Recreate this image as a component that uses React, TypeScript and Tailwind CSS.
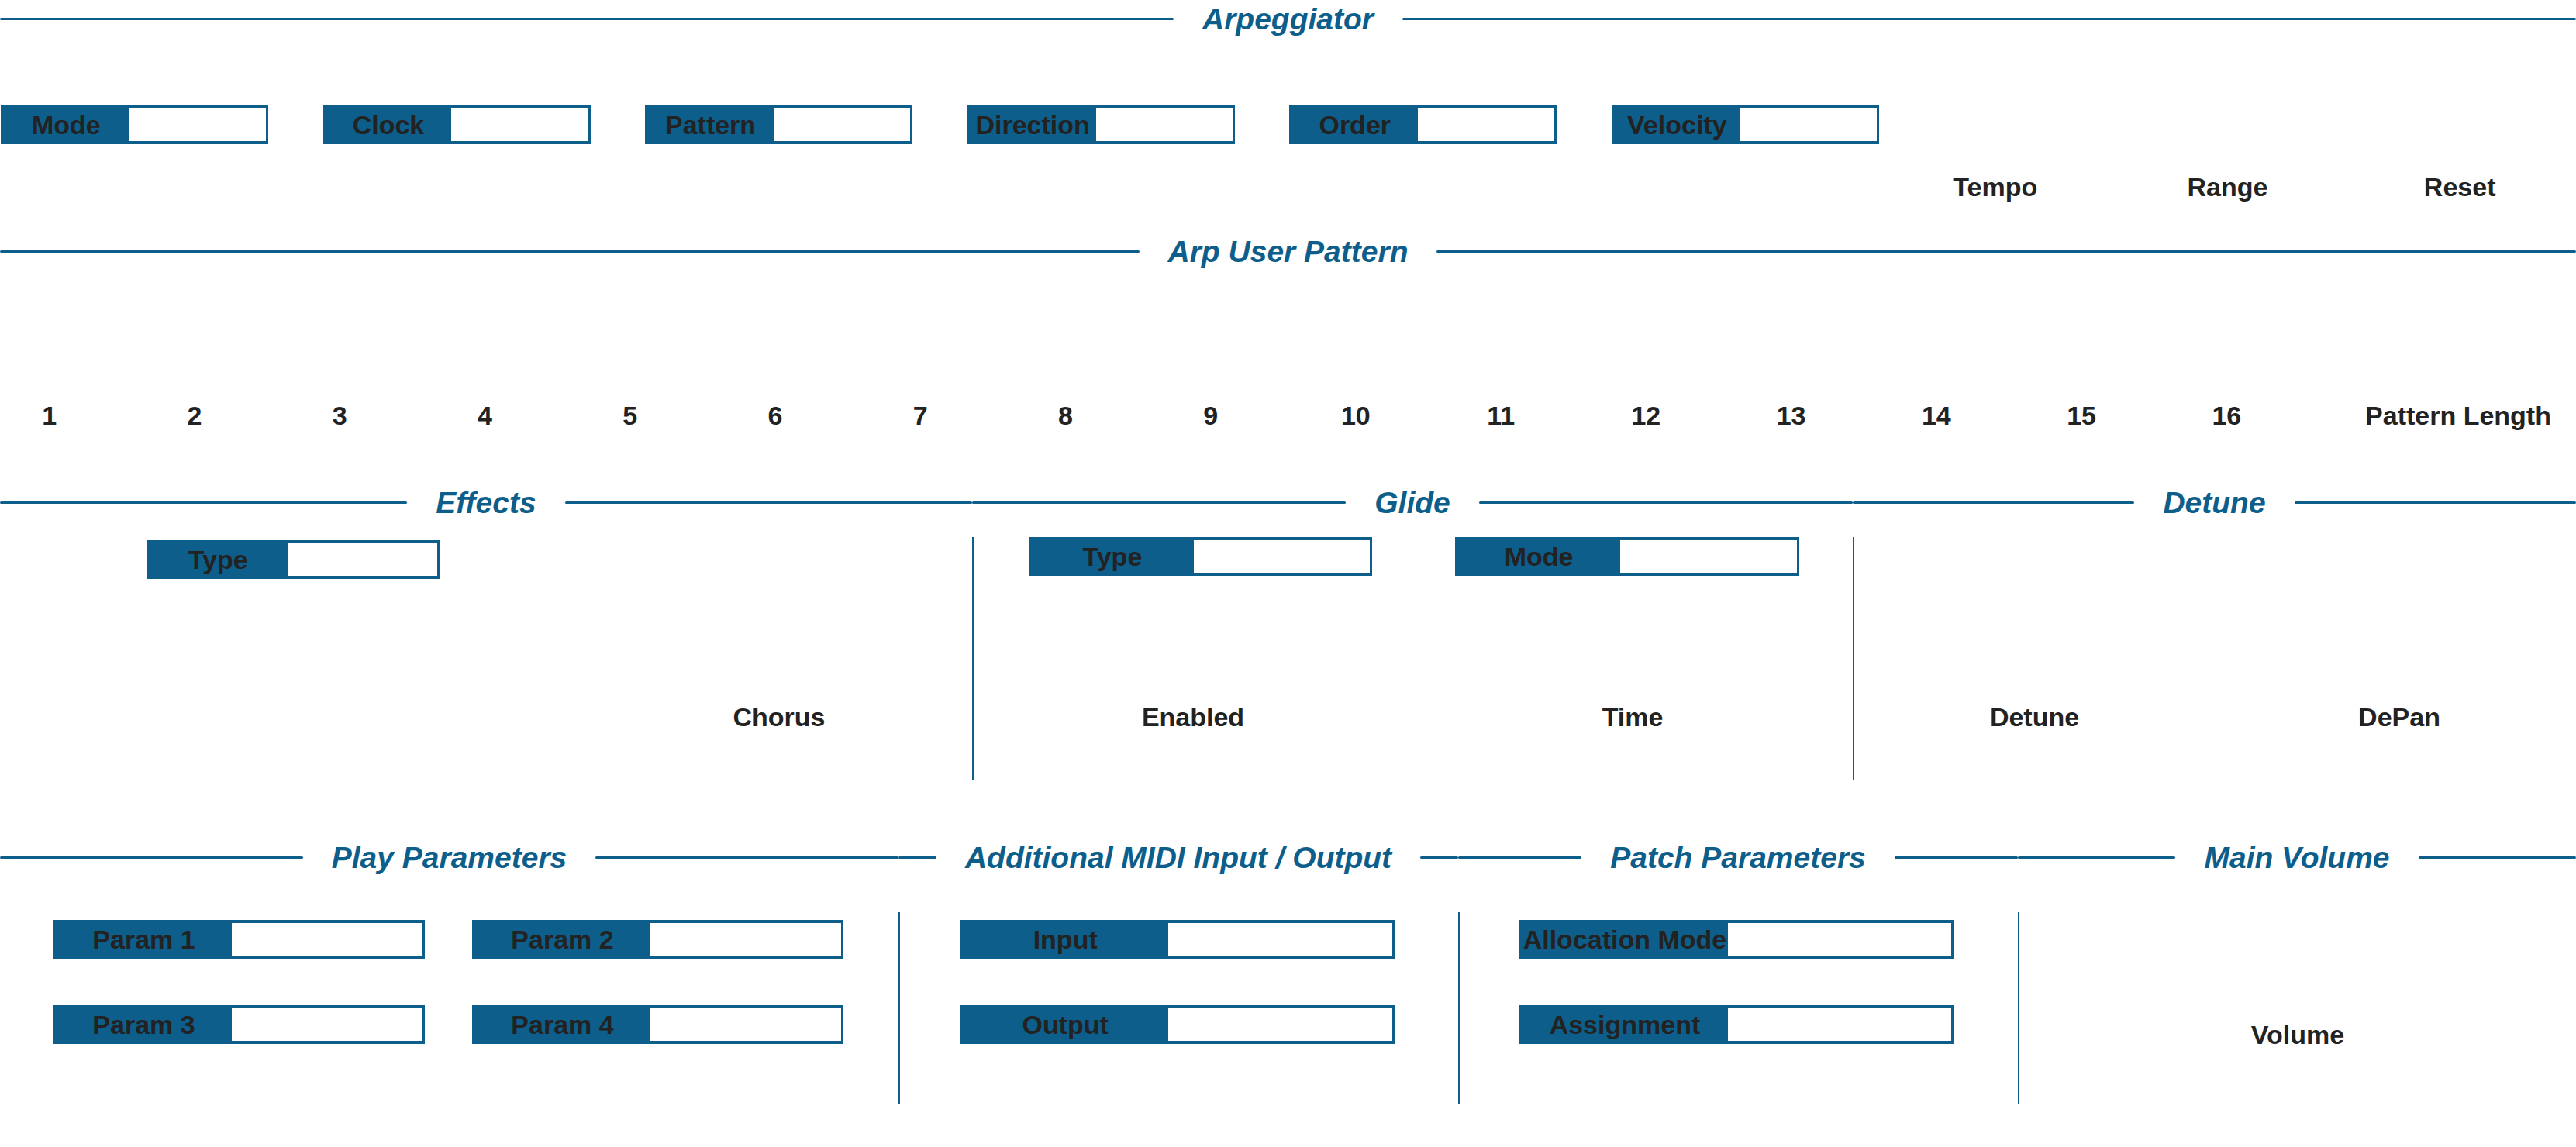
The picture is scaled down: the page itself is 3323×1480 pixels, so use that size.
import React from 'react';

const Rule: React.FC = () => <div className="h-[3px] flex-1 rounded-full bg-[#0d5e8a]" />;

const Header: React.FC<{ title: string }> = ({ title }) => (
  <div className="flex h-[48px] items-center">
    <Rule />
    <span className="mt-[2px] whitespace-nowrap px-[37px] text-[39px] font-bold italic text-[#0d5e8a]">{title}</span>
    <Rule />
  </div>
);

const Select: React.FC<{ label: string; className?: string }> = ({ label, className = '' }) => (
  <div className={`flex h-[50px] shrink-0 border-x-[3px] border-y-[4px] border-[#0d5e8a] bg-[#0d5e8a] ${className}`}>
    <div className="flex w-[48%] items-center justify-center whitespace-nowrap text-[34px] font-bold leading-none text-[#222]">
      {label}
    </div>
    <div className="flex-1 bg-white" />
  </div>
);

const Label: React.FC<{ text: string; className?: string }> = ({ text, className = '' }) => (
  <div className={`whitespace-nowrap text-center text-[34px] font-bold leading-[40px] text-[#222] ${className}`}>{text}</div>
);

const Divider: React.FC<{ className?: string }> = ({ className = '' }) => (
  <div className={`w-[2px] shrink-0 bg-[#0d5e8a] ${className}`} />
);

const arpBoxes = ['Mode', 'Clock', 'Pattern', 'Direction', 'Order', 'Velocity'];
const arpKnobs = ['Tempo', 'Range', 'Reset'];
const steps = Array.from({ length: 16 }, (_, i) => String(i + 1));

export default function App() {
  return (
    <div className="h-[1480px] w-[3323px] overflow-hidden bg-white font-['Liberation_Sans',Arial,sans-serif]">
      {/* Arpeggiator */}
      <Header title="Arpeggiator" />
      <div className="flex h-[252px] items-start">
        <div className="flex gap-[70.6px] pl-[1px] pt-[88px]">
          {arpBoxes.map((l) => (
            <Select key={l} label={l} className="w-[345px]" />
          ))}
        </div>
        <div className="flex flex-1 pt-[173px]">
          {arpKnobs.map((l) => (
            <Label key={l} text={l} className="flex-1" />
          ))}
        </div>
      </div>

      {/* Arp user pattern */}
      <Header title="Arp User Pattern" />
      <div className="flex h-[276px] items-start pt-[168px]">
        <div className="flex gap-[60px]">
          {steps.map((s) => (
            <Label key={s} text={s} className="w-[127.25px]" />
          ))}
        </div>
        <Label text="Pattern Length" className="ml-[60px] flex-1 pl-[23px]" />
      </div>

      {/* Effects / Glide / Detune */}
      <div className="flex h-[458px]">
        <div className="w-[1254px] shrink-0">
          <Header title="Effects" />
          <div className="flex items-start">
            <div className="w-[756px] pt-[25px]">
              <Select label="Type" className="ml-[189px] w-[378px]" />
            </div>
            <div className="flex-1 pt-[233px]">
              <Label text="Chorus" />
            </div>
          </div>
        </div>
        <div className="w-[1136px] shrink-0">
          <Header title="Glide" />
          <div className="flex items-start">
            <Divider className="mt-[21px] h-[313px]" />
            <div className="w-[566px] pt-[21px]">
              <Select label="Type" className="ml-[71px] w-[443px]" />
              <Label text="Enabled" className="mt-[162px]" />
            </div>
            <div className="flex-1 pt-[21px]">
              <Select label="Mode" className="ml-[55px] w-[444px]" />
              <Label text="Time" className="mt-[162px]" />
            </div>
          </div>
        </div>
        <div className="flex-1">
          <Header title="Detune" />
          <div className="flex items-start">
            <Divider className="mt-[21px] h-[313px]" />
            <div className="w-[465px] pt-[233px]">
              <Label text="Detune" />
            </div>
            <div className="flex-1 pl-[10px] pt-[233px]">
              <Label text="DePan" />
            </div>
          </div>
        </div>
      </div>

      {/* Play / MIDI / Patch / Volume */}
      <div className="flex h-[398px]">
        <div className="w-[1159px] shrink-0">
          <Header title="Play Parameters" />
          <div className="grid grid-cols-[479px_479px] gap-x-[61px] gap-y-[60px] pl-[69px] pt-[57px]">
            {['Param 1', 'Param 2', 'Param 3', 'Param 4'].map((l) => (
              <Select key={l} label={l} className="w-[479px]" />
            ))}
          </div>
        </div>
        <div className="w-[722px] shrink-0">
          <Header title="Additional MIDI Input / Output" />
          <div className="flex items-start">
            <Divider className="mt-[47px] h-[247px]" />
            <div className="flex flex-col gap-[60px] pl-[77px] pt-[57px]">
              <Select label="Input" className="w-[561px]" />
              <Select label="Output" className="w-[561px]" />
            </div>
          </div>
        </div>
        <div className="w-[722px] shrink-0">
          <Header title="Patch Parameters" />
          <div className="flex items-start">
            <Divider className="mt-[47px] h-[247px]" />
            <div className="flex flex-col gap-[60px] pl-[77px] pt-[57px]">
              <Select label="Allocation Mode" className="w-[560px]" />
              <Select label="Assignment" className="w-[560px]" />
            </div>
          </div>
        </div>
        <div className="flex-1">
          <Header title="Main Volume" />
          <div className="flex items-start">
            <Divider className="mt-[47px] h-[247px]" />
            <div className="flex-1 pt-[185px]">
              <Label text="Volume" />
            </div>
          </div>
        </div>
      </div>
    </div>
  );
}
